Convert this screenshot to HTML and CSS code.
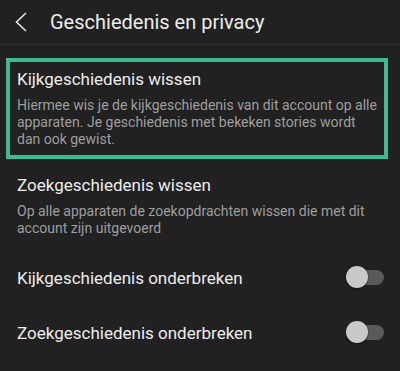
FILE: index.html
```html
<!DOCTYPE html>
<html>
<head>
<meta charset="utf-8">
<link rel="stylesheet" href="styles.css">
</head>
<body>
<header class="topbar">
  <svg class="back" width="14" height="22" viewBox="0 0 14 22"><path d="M12 2 L2.5 11 L12 20" fill="none" stroke="#e6e6e6" stroke-width="1.6"/></svg>
  <h1 class="title">Geschiedenis en privacy</h1>
</header>
<main class="list">
  <section class="item highlight">
    <div class="item-title">Kijkgeschiedenis wissen</div>
    <div class="item-desc">Hiermee wis je de kijkgeschiedenis van dit account op alle apparaten. Je geschiedenis met bekeken stories wordt dan ook gewist.</div>
  </section>
  <section class="item plain">
    <div class="item-title">Zoekgeschiedenis wissen</div>
    <div class="item-desc">Op alle apparaten de zoekopdrachten wissen die met dit account zijn uitgevoerd</div>
  </section>
  <div class="toggles">
    <section class="toggle-row">
      <span class="item-title">Kijkgeschiedenis onderbreken</span>
      <span class="switch"><span class="thumb"></span></span>
    </section>
    <section class="toggle-row">
      <span class="item-title">Zoekgeschiedenis onderbreken</span>
      <span class="switch"><span class="thumb"></span></span>
    </section>
  </div>
</main>
</body>
</html>
```
FILE: styles.css
```css
html, body {
  margin: 0;
  padding: 0;
  background: #212121;
  font-family: Roboto, "Noto Sans", sans-serif;
  color: #ececec;
  height: 371px;
  overflow: hidden;
}
.topbar {
  height: 45px;
  border-bottom: 1px solid #333333;
  display: flex;
  align-items: center;
  box-sizing: border-box;
}
.back {
  margin-left: 14px;
  margin-right: 22px;
  flex: none;
}
.title {
  margin: 0;
  font-size: 20px;
  font-weight: 400;
  color: #ececec;
}
.list {
  padding: 13px 12px 0 6px;
}
.item {
  padding: 7px;
}
.highlight {
  border: 4px solid #3dba92;
}
.plain {
  border: 4px solid transparent;
  padding-top: 12px;
}
.item-title {
  font-size: 17px;
  line-height: 20px;
  color: #ececec;
}
.item-desc {
  margin-top: 8px;
  font-size: 14px;
  line-height: 17px;
  color: #9e9e9e;
}
.toggles {
  padding-top: 2px;
}
.toggle-row {
  display: flex;
  align-items: center;
  justify-content: space-between;
  height: 55px;
  padding-left: 11px;
  padding-right: 4px;
}
.switch {
  position: relative;
  width: 30px;
  height: 15px;
  border-radius: 8px;
  background: #5a5a5a;
}
.thumb {
  position: absolute;
  left: -8px;
  top: -4px;
  width: 22px;
  height: 22px;
  border-radius: 50%;
  background: #c9c9c9;
  box-shadow: 0 1px 2px rgba(0,0,0,0.5);
}
```
